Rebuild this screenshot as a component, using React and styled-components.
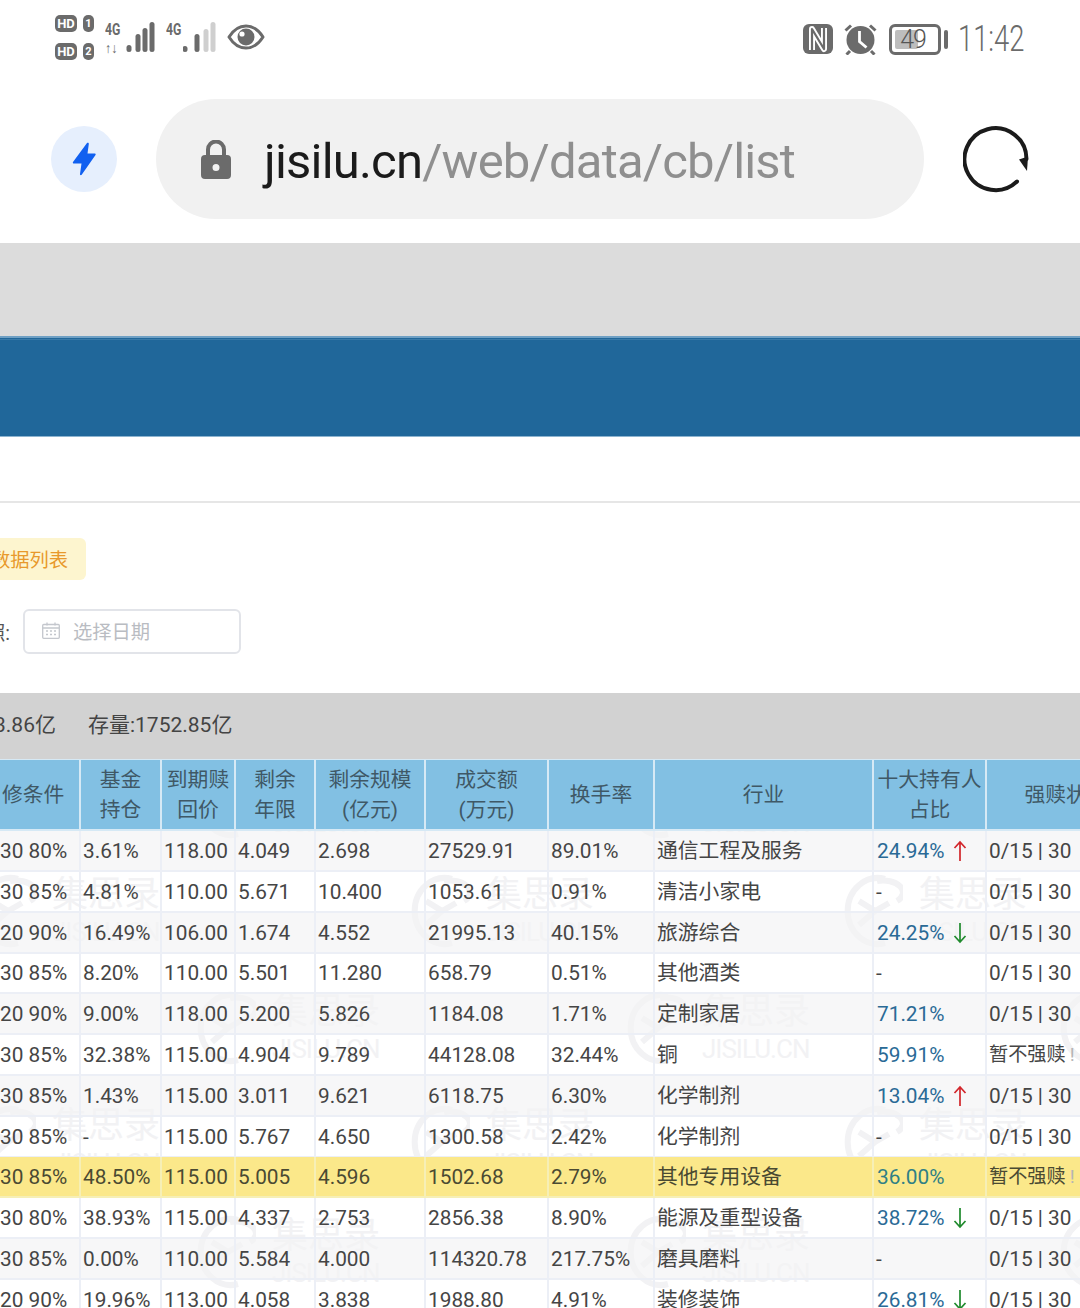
import React from "react";
import styled, { createGlobalStyle } from "styled-components";

const Global = createGlobalStyle`
  html, body { margin: 0; padding: 0; background: #fff; }
  body { font-family: Roboto, "Noto Sans CJK SC", sans-serif; color: #444; }
`;
const Page = styled.div`
  width: 1080px; height: 1308px; overflow: hidden; background: #fff;
`;
const StatusBar = styled.div`
  height: 80px; display: flex; justify-content: space-between; align-items: flex-start;
  padding: 15px 57px 0 55px; box-sizing: border-box; color: #6b6b6b;
`;
const StatusLeft = styled.div`display: flex; align-items: flex-start;`;
const StatusRight = styled.div`display: flex; align-items: center; padding-top: 7px; margin-right: 1px;`;
const SimStack = styled.div`display: flex; flex-direction: column; gap: 11px; margin-right: 11px;`;
const SimRow = styled.div`display: flex; gap: 6px;`;
const HdBadge = styled.span`
  height: 17px; width: 22px; border-radius: 5px; background: #6b6b6b; color: #fff;
  font: 700 13px/17px Roboto, sans-serif; text-align: center;
`;
const SimBadge = styled(HdBadge)`width: 11px; font-size: 11px;`;
const NetColumn = styled.div`
  width: 17px; flex: none; display: flex; flex-direction: column; margin: 7px 0 0 ${p => p.$gap || 0}px;
  font: 700 17px/15px Roboto, sans-serif;
`;
const NetText = styled.span`display: block; transform: scaleX(.72); transform-origin: left;`;
const NetArrows = styled.span`font-size: 14px; line-height: 11px; margin-top: 6px; display: block; white-space: nowrap; transform: scaleX(.9); transform-origin: left;`;
const Bars = styled.svg`display: block; margin-top: 6px; flex: none;`;
const EyeIcon = styled.svg`display: block; margin: 9px 0 0 10px; flex: none;`;
const NfcIcon = styled.svg`display: block; margin-right: 11px;`;
const AlarmIcon = styled.svg`display: block; margin-right: 12px;`;
const Battery = styled.div`
  width: 52px; height: 31px; box-sizing: border-box; border: 3px solid #6b6b6b; border-radius: 6px;
  padding: 3px; position: relative; margin-right: 3px; display: flex;
`;
const BatteryFill = styled.div`width: 58%; background: #bdbdbd; border-radius: 2px;`;
const BatteryText = styled.span`
  position: absolute; inset: 0; text-align: center; font: 300 25px/25px Roboto, sans-serif; color: #555; letter-spacing: -1px; padding-right: 4px;
`;
const BatteryNub = styled.div`width: 4px; height: 19px; background: #6b6b6b; border-radius: 2px; margin-right: 12px;`;
const Clock = styled.span`
  font: 300 36px/34px Roboto, sans-serif; color: #6b6b6b; width: 64px; white-space: nowrap;
  display: block; transform: scaleX(.76); transform-origin: left; margin-left: -2px;
`;

const Toolbar = styled.div`
  height: 163px; box-sizing: border-box; padding: 0 0 5px 51px;
  display: flex; align-items: center;
`;
const BoltCircle = styled.div`
  width: 66px; height: 66px; border-radius: 50%; background: #e6effd; margin-right: 39px;
  display: flex; align-items: center; justify-content: center;
`;
const UrlPill = styled.div`
  width: 768px; height: 120px; border-radius: 60px; background: #f1f1f1; box-sizing: border-box; margin-right: 39px;
  padding-left: 45px; display: flex; align-items: center; gap: 33px;
`;
const UrlText = styled.div`font: 400 49px/60px Roboto, sans-serif; letter-spacing: -.8px; color: #8f8f8f; white-space: nowrap; padding-top: 6px;`;
const UrlHost = styled.span`color: #1b1b1b;`;

const GreyBand = styled.div`height: 93px; background: #dcdcdc;`;
const BlueNav = styled.div`
  height: 101px; box-sizing: border-box; background: #20679a;
  border-top: 2px solid #6fa0c4; border-bottom: 1px solid #8db4d0;
  box-shadow: inset 0 1px 0 #20679a, inset 0 2px 0 #3a7aa8;
`;
const BlankStrip = styled.div`height: 64px; border-bottom: 2px solid #e6e6e6;`;
const Filters = styled.div`
  height: 190px; box-sizing: border-box; padding-top: 35px;
  display: flex; flex-direction: column; align-items: flex-start; gap: 29px;
`;
const Tag = styled.div`
  height: 42px; margin-left: -17px; padding: 0 18px 0 8px; box-sizing: border-box;
  background: #fdf5cf; color: #e8992b; border-radius: 6px; font-size: 19.3px; line-height: 45px; white-space: nowrap;
`;
const DateRow = styled.div`display: flex; align-items: center; margin-left: -14px; font-size: 19.3px; color: #555; gap: 13px;`;
const DateBox = styled.div`
  width: 218px; height: 45px; box-sizing: border-box; border: 2px solid #e2e4e9; border-radius: 6px; padding-bottom: 2px;
  display: flex; align-items: center; padding-left: 17px; gap: 13px; color: #b9bcc2; font-size: 19.3px;
`;
const SummaryBar = styled.div`
  height: 66px; background: #d2d2d2; display: flex; align-items: center; gap: 32px; color: #444; font-size: 21px;
  padding-bottom: 6px; box-sizing: border-box; overflow: hidden; white-space: nowrap;
`;
const SummaryCut = styled.span`margin-left: -6px;`;

const TableWrap = styled.div`position: relative; overflow: hidden; height: 549px; width: 1080px;`;
const Grid = "81px 81px 74px 80px 110px 123px 106px 219px 113px 160px";
const HeadRow = styled.div`
  display: grid; grid-template-columns: ${Grid}; height: 72px; box-sizing: border-box; width: 1147px;
  position: relative; z-index: 1;
`;
const HeadCell = styled.div`
  background: #82c0e3; border-right: 2px solid #d6e9f5; border-top: 1px solid #d6e9f5; border-bottom: 2px solid #d6e9f5;
  color: #3f5866; font-size: 20.8px; line-height: 29.5px; text-align: center; padding-top: 2px;
  display: flex; align-items: center; justify-content: ${p => p.$first ? "flex-start" : "center"};
  padding-left: ${p => p.$first ? 2 : 0}px;
  white-space: pre-line; box-sizing: border-box;
`;
const Row = styled.div`
  display: grid; grid-template-columns: ${Grid}; height: 40.8px; width: 1147px; position: relative; z-index: 1;
  background: ${p => p.$hl ? "#fbe88a" : p.$alt ? "rgba(243,243,244,.65)" : "transparent"};
`;
const Cell = styled.div`
  border-right: 2px solid ${p => p.$hl ? "#f6efb6" : "#eceff6"};
  border-bottom: 2px solid ${p => p.$hl ? "#f6efb6" : "#eceff6"};
  box-sizing: border-box; padding: 1px 0 0 2px; font-size: 20.8px; line-height: 38px; white-space: nowrap;
  color: ${p => p.$hl ? "#4a4a32" : "#454545"};
  display: flex; align-items: center;
`;
const FirstCell = styled(Cell)`padding-left: 0;`;
const Holder = styled.span`color: ${p => p.$hl ? "#2f7f85" : "#2a6a96"}; margin-left: 1px;`;
const Arrow = styled.svg`display: block; margin-left: 9px;`;
const WarnText = styled.span`font-size: 19.2px;`;
const Warn = styled.span`color: #b5b5b5; margin-left: 4px;`;

const Watermark = styled.div`
  position: absolute; left: ${p => p.$x}px; top: ${p => p.$y}px; z-index: 0; width: 190px; height: 76px;
  display: flex; gap: 16px; color: #f2f2f4; pointer-events: none;
`;
const WmText = styled.div`display: flex; flex-direction: column; align-items: flex-start;`;
const WmTitle = styled.div`font-size: 36px; line-height: 44px; white-space: nowrap;`;
const WmSub = styled.div`font-size: 26px; line-height: 30px; white-space: nowrap; letter-spacing: -1px;`;

const rows = [
  ["30 80%","3.61%","118.00","4.049","2.698","27529.91","89.01%","通信工程及服务","24.94%","up"],
  ["30 85%","4.81%","110.00","5.671","10.400","1053.61","0.91%","清洁小家电","-",""],
  ["20 90%","16.49%","106.00","1.674","4.552","21995.13","40.15%","旅游综合","24.25%","down"],
  ["30 85%","8.20%","110.00","5.501","11.280","658.79","0.51%","其他酒类","-",""],
  ["20 90%","9.00%","118.00","5.200","5.826","1184.08","1.71%","定制家居","71.21%",""],
  ["30 85%","32.38%","115.00","4.904","9.789","44128.08","32.44%","铜","59.91%","","w"],
  ["30 85%","1.43%","115.00","3.011","9.621","6118.75","6.30%","化学制剂","13.04%","up"],
  ["30 85%","-","115.00","5.767","4.650","1300.58","2.42%","化学制剂","-",""],
  ["30 85%","48.50%","115.00","5.005","4.596","1502.68","2.79%","其他专用设备","36.00%","","w"],
  ["30 80%","38.93%","115.00","4.337","2.753","2856.38","8.90%","能源及重型设备","38.72%","down"],
  ["30 85%","0.00%","110.00","5.584","4.000","114320.78","217.75%","磨具磨料","-",""],
  ["20 90%","19.96%","113.00","4.058","3.838","1988.80","4.91%","装修装饰","26.81%","down"],
];
const heads = ["修条件","基金\n持仓","到期赎\n回价","剩余\n年限","剩余规模\n(亿元)","成交额\n(万元)","换手率","行业","十大持有人\n占比","强赎状态"];
const marks = [
  [196,5],[626,5],
  [-24,114],[410,114],[843,114],
  [196,231],[626,231],[1059,231],
  [-24,345],[410,345],[843,345],
  [196,455],[626,455],[1059,455],
];

const SignalBars = ({ on, xs, hs }) => (
  <Bars width="34" height="32" viewBox="0 0 34 32">
    {hs.map((h, i) => (
      <rect key={i} x={xs[i] - 2.5} y={31 - h} width="5" height={h} rx="2.5" fill={i < on ? "#6b6b6b" : "#cfcfcf"} />
    ))}
  </Bars>
);

const ArrowMark = ({ dir }) => (
  <Arrow width="14" height="22" viewBox="0 0 14 22" fill="none" stroke={dir === "up" ? "#d2262b" : "#1f8a2d"} strokeWidth="1.7">
    {dir === "up" ? <path d="M7 21V2M1.5 8 7 2l5.5 6" /> : <path d="M7 1v19M1.5 14 7 20l5.5-6" />}
  </Arrow>
);

export default function App() {
  return (
    <Page>
      <Global />
      <StatusBar>
        <StatusLeft>
          <SimStack>
            <SimRow><HdBadge>HD</HdBadge><SimBadge>1</SimBadge></SimRow>
            <SimRow><HdBadge>HD</HdBadge><SimBadge>2</SimBadge></SimRow>
          </SimStack>
          <NetColumn><NetText>4G</NetText><NetArrows>↑↓</NetArrows></NetColumn>
          <SignalBars on={4} xs={[7, 16, 23, 30]} hs={[7, 18, 24, 30]} />
          <NetColumn $gap={10}><NetText>4G</NetText></NetColumn>
          <SignalBars on={2} xs={[2, 14, 23, 30]} hs={[6, 18, 23, 30]} />
          <EyeIcon width="38" height="26" viewBox="0 0 38 26">
            <path d="M2 13C7 5 13 2 19 2s12 3 17 11c-5 8-11 11-17 11S7 21 2 13Z" fill="none" stroke="#6b6b6b" strokeWidth="3" strokeLinejoin="round" />
            <circle cx="19" cy="13" r="8.5" fill="#6b6b6b" />
            <circle cx="15" cy="10" r="2.6" fill="#fff" />
          </EyeIcon>
        </StatusLeft>
        <StatusRight>
          <NfcIcon width="30" height="30" viewBox="0 0 30 30">
            <rect x="0" y="0" width="30" height="30" rx="6" fill="#6b6b6b" />
            <path d="M9 26V5l12 20V4" fill="none" stroke="#fff" strokeWidth="6" strokeLinejoin="round" />
            <path d="M9 26V5l12 20V4" fill="none" stroke="#6b6b6b" strokeWidth="2.200" strokeLinejoin="round" />
          </NfcIcon>
          <AlarmIcon width="33" height="31" viewBox="0 0 33 31">
            <circle cx="16.5" cy="16" r="14" fill="#6b6b6b" />
            <path d="M15.500 7v10.500l7 6" fill="none" stroke="#fff" strokeWidth="2.800" />
            <path d="M1.500 6.500 7 1.500M31.500 6.500l-5.500-5M6 27l-3.500 3.500M27 27l3.500 3.500" stroke="#6b6b6b" strokeWidth="3" fill="none" />
          </AlarmIcon>
          <Battery><BatteryFill /><BatteryText>49</BatteryText></Battery>
          <BatteryNub />
          <Clock>11:42</Clock>
        </StatusRight>
      </StatusBar>

      <Toolbar>
        <BoltCircle>
          <svg width="26" height="34" viewBox="0 0 26 34">
            <path d="M16 1 2 20c-.5.8 0 1.500 1 1.500h7.500L9 32c-.2 1.200 1 1.600 1.700.7L24.500 13c.5-.8 0-1.500-1-1.500h-7L17.800 2c.2-1.200-1-1.800-1.800-1Z" fill="#1160f0" />
          </svg>
        </BoltCircle>
        <UrlPill>
          <svg width="30" height="39" viewBox="0 0 30 39" style={{ flex: "none" }}>
            <path d="M7 17V9.500a8 8 0 0 1 16 0V17" fill="none" stroke="#6b6b6b" strokeWidth="4" />
            <path fillRule="evenodd" d="M4 15h22a4 4 0 0 1 4 4v16a4 4 0 0 1-4 4H4a4 4 0 0 1-4-4V19a4 4 0 0 1 4-4Zm11 9a3.500 3.500 0 1 0 0 7 3.500 3.500 0 0 0 0-7Z" fill="#6b6b6b" />
          </svg>
          <UrlText><UrlHost>jisilu.cn</UrlHost>/web/data/cb/list</UrlText>
        </UrlPill>
        <svg width="66" height="67" viewBox="0 0 66 67" fill="none">
          <path d="M54 55.500A31 31 0 1 1 63.500 33" stroke="#1b1b1b" strokeWidth="4" strokeLinecap="round" fill="none" />
          <path d="M56 33.500 65 30.500 64 45Z" fill="#1b1b1b" />
        </svg>
      </Toolbar>

      <GreyBand />
      <BlueNav />
      <BlankStrip />
      <Filters>
        <Tag>数据列表</Tag>
        <DateRow>
          <span>照:</span>
          <DateBox>
            <svg width="18" height="17" viewBox="0 0 18 17" fill="none" stroke="#c4c7cd" strokeWidth="1.300" style={{ flex: "none" }}>
              <rect x=".7" y="2.500" width="16.600" height="13.800" rx="1" />
              <path d="M.7 6h16.600M5 .5v3M13 .5v3M4 9h2M8 9h2M12 9h2M4 12.500h2M8 12.500h2M12 12.500h2" />
            </svg>
            选择日期
          </DateBox>
        </DateRow>
      </Filters>
      <SummaryBar>
        <SummaryCut>3.86亿</SummaryCut>
        <span>存量:1752.85亿</span>
      </SummaryBar>
      <TableWrap>
        <HeadRow>
          {heads.map((h, i) => <HeadCell key={i} $first={i === 0}>{h}</HeadCell>)}
        </HeadRow>
        {marks.map(([x, y], i) => (
          <Watermark key={i} $x={x} $y={y}>
            <svg width="60" height="76" viewBox="0 0 60 76" fill="none" stroke="#f2f2f4" strokeWidth="6" style={{ flex: "none" }}>
              <path d="M42 6a30 33 0 1 0 0 64" />
              <path d="M34 8a20 12 0 0 1 20 20M16 28l16 10-16 14M32 38l14-8" />
            </svg>
            <WmText><WmTitle>集思录</WmTitle><WmSub>JISILU.CN</WmSub></WmText>
          </Watermark>
        ))}
        {rows.map((r, i) => {
          const hl = i === 8;
          return (
            <Row key={i} $alt={i % 2 === 0} $hl={hl}>
              <FirstCell $hl={hl}>{r[0]}</FirstCell>
              {r.slice(1, 8).map((c, j) => <Cell key={j} $hl={hl}>{c}</Cell>)}
              <Cell $hl={hl}>
                {r[8] === "-" ? "-" : <Holder $hl={hl}>{r[8]}</Holder>}
                {r[9] && <ArrowMark dir={r[9]} />}
              </Cell>
              <Cell $hl={hl}>
                {r[10] ? <WarnText>暂不强赎<Warn>!</Warn></WarnText> : "0/15 | 30"}
              </Cell>
            </Row>
          );
        })}
      </TableWrap>
    </Page>
  );
}
